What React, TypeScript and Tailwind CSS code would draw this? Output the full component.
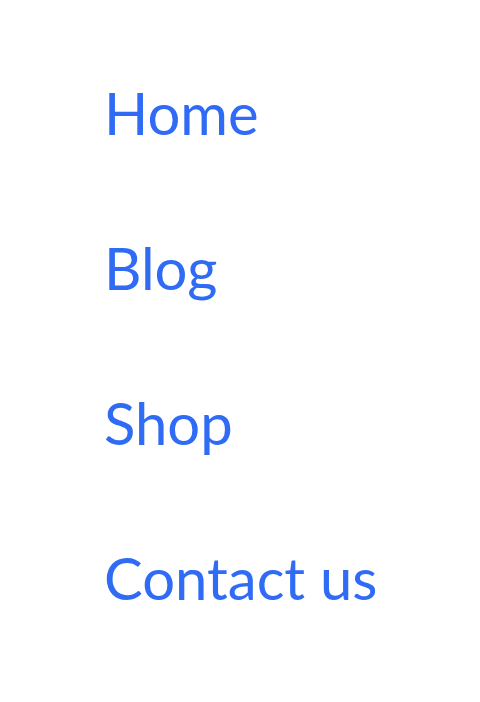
import React from 'react';

const links = ['Home', 'Blog', 'Shop', 'Contact us'];

const App: React.FC = () => {
  return (
    <div className="w-[480px] h-[702px] bg-white">
      <ul
        className="pl-[104px] pt-[84px] flex flex-col"
        style={{ fontFamily: 'Lato, "Noto Sans", sans-serif' }}
      >
        {links.map((link) => (
          <li key={link} className="h-[155px] leading-[58px] text-[58px] text-[#2f6bf5]">
            <a href="#">{link}</a>
          </li>
        ))}
      </ul>
    </div>
  );
};

export default App;
